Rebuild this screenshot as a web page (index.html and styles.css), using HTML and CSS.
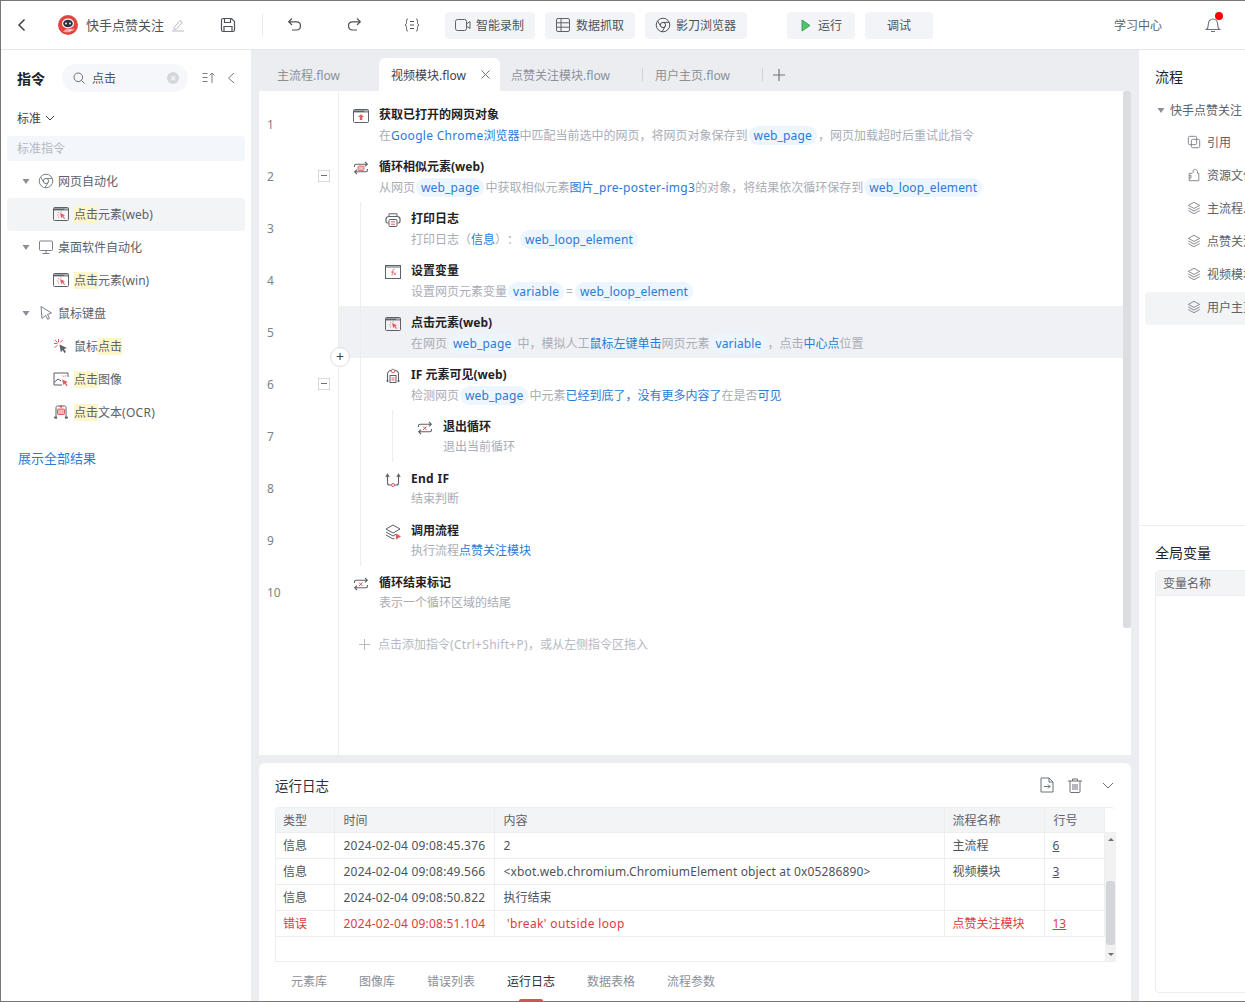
FILE: index.html
```html
<!DOCTYPE html>
<html lang="zh">
<head>
<meta charset="utf-8">
<title>快手点赞关注</title>
<link rel="stylesheet" href="styles.css">
</head>
<body>
<svg class="defs" width="0" height="0" aria-hidden="true">
  <defs>
    <symbol id="chrome" viewBox="0 0 16 16"><g fill="none" stroke="currentColor"><circle cx="8" cy="8" r="6.8"/><circle cx="8" cy="8" r="2.6"/><path d="M8 5.4h6M5.8 9.4 2.6 4M10.2 9.4 7 14.7"/></g></symbol>
    <symbol id="monitor" viewBox="0 0 16 16"><g fill="none" stroke="currentColor"><rect x="1.5" y="2" width="13" height="9.5" rx=".8"/><path d="M8 11.5V14M4.5 14.5h7"/></g></symbol>
    <symbol id="cursor" viewBox="0 0 16 16"><path d="M3 1.5 13.5 8l-4 1.4 2 4-1.8 1-2-4L4 13.5z" fill="none" stroke="currentColor" stroke-linejoin="round"/></symbol>
    <symbol id="win-click" viewBox="0 0 16 16"><rect x=".5" y="1.500" width="15" height="13" rx="1" fill="none" stroke="#5d6168"/><path d="M.5 3.400h15" stroke="#5d6168" stroke-width="2"/><path d="M11.500 3.200h1M13.500 3.200h1" stroke="#fff"/><path d="m7 7 5 2.200-1.800.7 1.800 2.300-.9.8-1.800-2.400-1 1.600z" fill="#e4595c"/><path d="M5 6 6.200 7.300M4 9H5.500M5 11.500 6.200 10.400M8 5.200V6.400" stroke="#e98b8d"/></symbol>
    <symbol id="mouse-click" viewBox="0 0 16 16"><path d="M6.500 6.500 14 10l-3 1 2 3-1.500 1-2-3-1.700 2.500z" fill="#5d6168"/><path d="M5.500 1v3.500M1 5.500h3.500M2 2l2.500 2.500M9.500 2 7.500 4.500M1.500 9.500l3-2" stroke="#e4595c"/></symbol>
    <symbol id="img-click" viewBox="0 0 16 16"><path d="M15 6V2H1v12h8" fill="none" stroke="#5d6168"/><path d="m1 11.500 4-3.500 3 2" fill="none" stroke="#5d6168"/><path d="m9 8.500 6 2.500-2.200.8 1.700 2.700-1 .7-1.800-2.700-1.200 1.800z" fill="#e4595c"/><path d="M9.500 4.500 10.500 6M13 4l-.8 1.800" stroke="#e98b8d"/></symbol>
    <symbol id="ocr" viewBox="0 0 16 16"><path d="M3 12V3.500C3 2.500 3.800 2 4.500 2h7c.8 0 1.500.5 1.500 1.500V12" fill="none" stroke="#5d6168"/><rect x="4.500" y="5" width="7" height="5.500" rx="1" fill="#f3b7b8" stroke="#e4595c"/><path d="M1 13.500h3M12 13.500h3" stroke="#5d6168" stroke-width="1.500"/><circle cx="3" cy="13.500" r="1.200" fill="#5d6168"/><circle cx="13" cy="13.500" r="1.200" fill="#5d6168"/><circle cx="8" cy="2.500" r="1.300" fill="#e4595c"/></symbol>
    <symbol id="win-up" viewBox="0 0 16 16"><rect x=".5" y="1.500" width="15" height="13" rx="1" fill="none" stroke="#5d6168"/><path d="M.5 3.400h15" stroke="#5d6168" stroke-width="2"/><path d="M11.500 3.200h1M13.500 3.200h1" stroke="#fff"/><path d="M8 6.200 11 9H9.200v3H6.800V9H5z" fill="#e4595c"/></symbol>
    <symbol id="loop" viewBox="0 0 16 16"><path d="M1.500 7V6c0-1 .7-1.800 1.700-1.800H14M12 2l2.300 2.200L12 6.400M14.500 9v1c0 1-.7 1.800-1.700 1.800H2M4 9.600l-2.300 2.200L4 14" fill="none" stroke="#5d6168" stroke-width="1.100"/><rect x="5" y="6" width="6" height="4.500" rx=".8" fill="#f4b9ba" stroke="#e4595c" stroke-width=".8"/></symbol>
    <symbol id="loop-x" viewBox="0 0 16 16"><path d="M1.500 7V6c0-1 .7-1.800 1.700-1.800H14M12 2l2.300 2.200L12 6.400M14.500 9v1c0 1-.7 1.800-1.700 1.800H2M4 9.600l-2.300 2.200L4 14" fill="none" stroke="#5d6168" stroke-width="1.100"/><path d="m6 6.500 3.500 3.500M9.500 6.500 6 10" stroke="#e4595c"/></symbol>
    <symbol id="print" viewBox="0 0 16 16"><path d="M3.500 11H2.500C1.700 11 1 10.300 1 9.500V7C1 5.500 2.500 4.500 4 4.500h8c1.500 0 3 1 3 2.500v2.500c0 .8-.7 1.500-1.500 1.500h-1" fill="none" stroke="#5d6168" stroke-width="1.200"/><path d="M4 4V1.800h8V4" fill="none" stroke="#5d6168"/><rect x="4" y="7.500" width="8" height="7" rx="1" fill="#fff" stroke="#5d6168"/><path d="M6 9.800h4M6 12.200h4" stroke="#e4595c"/></symbol>
    <symbol id="fx" viewBox="0 0 16 16"><rect x=".5" y="1.500" width="15" height="13" fill="none" stroke="#5d6168"/><path d="M.5 3h15" stroke="#5d6168"/><path d="M9.500 5.500C8 5 7.800 6 7.600 7.500L7 11.500M6 8h3M8.800 8.500l2 2.500M10.800 8.500l-2 2.500" fill="none" stroke="#e4595c" stroke-width=".8"/></symbol>
    <symbol id="if" viewBox="0 0 16 16"><path d="M2.500 14V6.500C2.500 4 4 2.500 6 2.500h4c2 0 3.500 1.500 3.500 4V14" fill="none" stroke="#5d6168" stroke-width="1.100"/><rect x="5" y="7.500" width="6" height="7" fill="#fff" stroke="#5d6168"/><circle cx="8" cy="3" r="1.800" fill="#fff" stroke="#e4595c"/><path d="M6.500 10h3M6.500 12h3" stroke="#e4595c"/><path d="M1 12.500 2.500 14.500 4 12.500M12 12.500l1.500 2 1.500-2" fill="#5d6168"/></symbol>
    <symbol id="endif" viewBox="0 0 16 16"><path d="M2.500 4v7c0 1.500.8 2 2 2h2M13.500 4v7c0 1.500-.8 2-2 2h-2M.8 5l1.700-2.800L4.200 5M11.800 5l1.700-2.800L15.200 5" fill="none" stroke="#5d6168" stroke-width="1.100"/><circle cx="8" cy="13" r="1.500" fill="#fff" stroke="#e4595c"/></symbol>
    <symbol id="call" viewBox="0 0 16 16"><path d="M8 1 15 5 8 9 1 5z M1 8l7 4 3-1.700M1 11l7 4 1.500-.8" fill="none" stroke="#5d6168"/><path d="m11 9.500 5 3-5 3z" fill="#e4595c"/></symbol>
    <symbol id="layers" viewBox="0 0 16 16"><path d="M8 1.500 14.500 5 8 8.500 1.500 5zM1.500 8 8 11.500 14.500 8M1.500 11 8 14.500 14.500 11" fill="none" stroke="currentColor"/></symbol>
    <symbol id="ref" viewBox="0 0 16 16"><g fill="none" stroke="currentColor"><rect x="1.500" y="1.500" width="9.500" height="9.500" rx="1.500"/><rect x="5" y="5" width="9.500" height="9.500" rx="1.500"/></g></symbol>
    <symbol id="puzzle" viewBox="0 0 16 16"><path d="M2.500 14.500V6H6l1-1V3.500C7 2.500 8 1.500 9 1.500s3 1.500 3 2.500V6h1.500v8.500zM2.500 8.500h2v3h-2" fill="none" stroke="currentColor"/></symbol>
    <symbol id="caret" viewBox="0 0 8 8"><path d="M.5 2h7L4 7z" fill="currentColor"/></symbol>
  </defs>
</svg>
<div class="app">
  <header class="topbar">
    <svg class="ic back" width="10" height="14" viewBox="0 0 10 14"><path d="M7.500 1.500 2 7l5.500 5.500" fill="none" stroke="#3e434b" stroke-width="1.500"/></svg>
    <svg class="logo" width="20" height="20" viewBox="0 0 20 20"><circle cx="10" cy="10" r="10" fill="#e2453f"/><path d="M5 16.500c2 1 6 1.500 10-1l2-2-3 .5H8z" fill="#f4a8a5"/><ellipse cx="10" cy="8.500" rx="6" ry="5" fill="#fff"/><ellipse cx="10" cy="8.500" rx="4.800" ry="3.800" fill="#2c3242"/><circle cx="8" cy="8.500" r=".9" fill="#fff"/><circle cx="12" cy="8.500" r=".9" fill="#fff"/><path d="M11 16c1-.3 1.800-1 2-2" stroke="#fff" fill="none"/></svg>
    <span class="doc-name">快手点赞关注</span>
    <svg class="ic pencil" width="14" height="14" viewBox="0 0 14 14"><path d="M3 9.500 9 2.500l2.200 1.800-6 7H3zM1 13h12" fill="none" stroke="#b6bac2"/></svg>
    <svg class="ic save" width="16" height="16" viewBox="0 0 16 16"><path d="M1.500 3c0-.8.600-1.500 1.500-1.500h8.500l3 3V13c0 .8-.6 1.500-1.500 1.500H3c-.9 0-1.500-.7-1.500-1.500zM4.500 1.500v4h6v-4M4 14.500V9.500h8v5" fill="none" stroke="#4e535b" stroke-width="1.200"/></svg>
    <i class="vsep"></i>
    <svg class="ic undo" width="16" height="16" viewBox="0 0 16 16"><path d="M5 1.500 1.700 4.800 5 8M2 4.800h7.500c2.500 0 4 1.800 4 4s-1.500 4.200-4 4.200H5" fill="none" stroke="#4e535b" stroke-width="1.200"/></svg>
    <svg class="ic redo" width="16" height="16" viewBox="0 0 16 16"><path d="M11 1.500l3.300 3.300L11 8M14 4.800H6.500c-2.500 0-4 1.800-4 4s1.500 4.200 4 4.200H11" fill="none" stroke="#4e535b" stroke-width="1.200"/></svg>
    <svg class="ic vars" width="16" height="14" viewBox="0 0 16 14"><path d="M4 1C2.500 1 2.500 2 2.500 3.500S2.500 6.500 1 7c1.500.5 1.500 2 1.500 3.500S2.500 13 4 13M12 1c1.500 0 1.500 1 1.500 2.500s0 3 1.500 3.500c-1.500.5-1.500 2-1.500 3.500S13.500 13 12 13M6 3.500h4M6 7h4M6 10.500h4" fill="none" stroke="#4e535b"/></svg>
    <div class="tool-btn rec"><svg width="16" height="14" viewBox="0 0 16 14"><rect x=".5" y="1.500" width="11" height="11" rx="2" fill="none" stroke="#5d6168"/><path d="m12 5.500 3-2v7l-3-2" fill="none" stroke="#5d6168"/></svg>智能录制</div>
    <div class="tool-btn grab"><svg width="14" height="14" viewBox="0 0 14 14"><rect x=".5" y=".5" width="13" height="13" rx="1.500" fill="none" stroke="#5d6168"/><path d="M.5 4.800h13M.5 9.200h13M5 .5v13" stroke="#5d6168" fill="none"/></svg>数据抓取</div>
    <div class="tool-btn browser"><svg class="gray" width="16" height="16"><use href="#chrome"/></svg>影刀浏览器</div>
    <div class="tool-btn run"><svg width="10" height="13" viewBox="0 0 10 13"><path d="M1 1l8 5.500L1 12z" fill="#52c26b" stroke="#3aa655"/></svg>运行</div>
    <div class="tool-btn debug">调试</div>
    <span class="learn">学习中心</span>
    <span class="bell"><svg width="16" height="16" viewBox="0 0 16 16"><path d="M1.500 12.500h13c-1.500-1-1.800-2.500-1.800-5C12.700 4.500 11 2 8 2S3.300 4.500 3.300 7.500c0 2.500-.3 4-1.800 5zM6 14.500h4" fill="none" stroke="#6b7079" stroke-width="1.100"/></svg><i class="dot"></i></span>
  </header>
  <div class="main">
    <aside class="side">
      <div class="side-head">
        <b class="side-title">指令</b>
        <div class="search">
          <svg width="12" height="12" viewBox="0 0 12 12"><circle cx="5.300" cy="5.300" r="4.300" fill="none" stroke="#6b7079"/><path d="m8.500 8.500 3 3" stroke="#6b7079"/></svg>
          <span class="q">点击</span>
          <i class="clear">×</i>
        </div>
        <svg class="sort" width="14" height="12" viewBox="0 0 14 12"><path d="M.5 1.500h5M.5 5.500h5M.5 9.500h5M10 11V1M7.500 3.500 10 1l2.500 2.500" fill="none" stroke="#777c85"/></svg>
        <svg class="collapse" width="8" height="12" viewBox="0 0 8 12"><path d="M7 1 1.500 6 7 11" fill="none" stroke="#777c85"/></svg>
      </div>
      <div class="std">标准<svg width="10" height="6" viewBox="0 0 10 6"><path d="m1 1 4 4 4-4" fill="none" stroke="#3e434b"/></svg></div>
      <div class="std-bar">标准指令</div>
      <ul class="tree">
        <li class="group"><svg class="car"><use href="#caret"/></svg><svg class="g-ic"><use href="#chrome"/></svg>网页自动化</li>
        <li class="leaf sel"><svg class="l-ic"><use href="#win-click"/></svg><span><mark>点击</mark>元素(web)</span></li>
        <li class="group"><svg class="car"><use href="#caret"/></svg><svg class="g-ic"><use href="#monitor"/></svg>桌面软件自动化</li>
        <li class="leaf"><svg class="l-ic"><use href="#win-click"/></svg><span><mark>点击</mark>元素(win)</span></li>
        <li class="group"><svg class="car"><use href="#caret"/></svg><svg class="g-ic"><use href="#cursor"/></svg>鼠标键盘</li>
        <li class="leaf"><svg class="l-ic"><use href="#mouse-click"/></svg><span>鼠标<mark>点击</mark></span></li>
        <li class="leaf"><svg class="l-ic"><use href="#img-click"/></svg><span><mark>点击</mark>图像</span></li>
        <li class="leaf"><svg class="l-ic"><use href="#ocr"/></svg><span><mark>点击</mark>文本<span class="lat">(OCR)</span></span></li>
      </ul>
      <a class="show-all">展示全部结果</a>
    </aside>

    <section class="center">
      <nav class="tabs">
        <div class="tab t1">主流程.flow</div>
        <div class="tab t2 on">视频模块.flow<svg width="9" height="9" viewBox="0 0 9 9"><path d="m.5.500 8 8M8.500.500l-8 8" stroke="#70757e"/></svg></div>
        <div class="tab t3">点赞关注模块.flow<i class="tsep"></i></div>
        <div class="tab t4">用户主页.flow<i class="tsep"></i></div>
        <svg class="plus" width="12" height="12" viewBox="0 0 12 12"><path d="M6 0v12M0 6h12" stroke="#70757e" stroke-width="1.200"/></svg>
      </nav>
      <div class="editor">
        <div class="gutter">
          <div class="ln">1</div>
          <div class="ln">2<i class="fold"></i></div>
          <div class="ln">3</div>
          <div class="ln">4</div>
          <div class="ln">5</div>
          <div class="ln">6<i class="fold"></i></div>
          <div class="ln">7</div>
          <div class="ln">8</div>
          <div class="ln">9</div>
          <div class="ln">10</div>
        </div>
        <div class="code">
          <div class="step"><svg class="s-ic"><use href="#win-up"/></svg><div><h4>获取已打开的网页对象</h4><p>在<a class="lat">Google Chrome</a><a>浏览器</a>中匹配当前选中的网页，将网页对象保存到<span class="pill">web_page</span>，网页加载超时后重试此指令</p></div></div>
          <div class="step"><svg class="s-ic"><use href="#loop"/></svg><div><h4>循环相似元素(web)</h4><p>从网页<span class="pill">web_page</span>中获取相似元素<a>图片</a><a class="lat">_pre-poster-img3</a>的对象，将结果依次循环保存到<span class="pill">web_loop_element</span></p></div></div>
          <div class="block">
            <div class="step"><svg class="s-ic"><use href="#print"/></svg><div><h4>打印日志</h4><p>打印日志（<a>信息</a>）：<span class="pill">web_loop_element</span></p></div></div>
            <div class="step"><svg class="s-ic"><use href="#fx"/></svg><div><h4>设置变量</h4><p>设置网页元素变量<span class="pill">variable</span><span class="eq">=</span><span class="pill">web_loop_element</span></p></div></div>
            <div class="step active"><svg class="s-ic"><use href="#win-click"/></svg><div><h4>点击元素(web)</h4><p>在网页<span class="pill">web_page</span>中，模拟人工<a>鼠标左键单击</a>网页元素<span class="pill">variable</span>，点击<a>中心点</a>位置</p></div><button class="add">+</button></div>
            <div class="step"><svg class="s-ic"><use href="#if"/></svg><div><h4>IF 元素可见(web)</h4><p>检测网页<span class="pill">web_page</span>中元素<a>已经到底了，没有更多内容了</a>在是否<a>可见</a></p></div></div>
            <div class="block">
              <div class="step"><svg class="s-ic"><use href="#loop-x"/></svg><div><h4>退出循环</h4><p class="plain">退出当前循环</p></div></div>
            </div>
            <div class="step"><svg class="s-ic"><use href="#endif"/></svg><div><h4 class="lat">End IF</h4><p class="plain">结束判断</p></div></div>
            <div class="step"><svg class="s-ic"><use href="#call"/></svg><div><h4>调用流程</h4><p class="plain">执行流程<a>点赞关注模块</a></p></div></div>
          </div>
          <div class="step"><svg class="s-ic"><use href="#loop-x"/></svg><div><h4>循环结束标记</h4><p class="plain">表示一个循环区域的结尾</p></div></div>
          <div class="hint"><svg width="11" height="11" viewBox="0 0 11 11"><path d="M5.500 0v11M0 5.500h11" stroke="#b5b9c2"/></svg><span>点击添加指令<span class="lat">(Ctrl+Shift+P)</span>，或从左侧指令区拖入</span></div>
        </div>
        <div class="vbar"><i></i></div>
      </div>
      <div class="log">
        <div class="log-head">
          <span class="log-title">运行日志</span>
          <svg class="li1" width="14" height="16" viewBox="0 0 14 16"><path d="M1 1h8l4 4v10H1zM9 1v4h4M4 9.500h6M8 7.500l2 2-2 2" fill="none" stroke="#6b7079"/></svg>
          <svg class="li2" width="14" height="15" viewBox="0 0 14 15"><path d="M0 3h14M4.500 3V1h5v2M2 3v10.500c0 .5.300 1 1 1h8c.7 0 1-.5 1-1V3M5 6v6M7 6v6M9 6v6" fill="none" stroke="#6b7079"/></svg>
          <svg class="li3" width="12" height="7" viewBox="0 0 12 7"><path d="m1 1 5 5 5-5" fill="none" stroke="#6b7079"/></svg>
        </div>
        <div class="grid-wrap">
          <table class="grid">
            <colgroup><col class="c1"><col class="c2"><col class="c3"><col class="c4"><col class="c5"></colgroup>
            <thead><tr><th>类型</th><th>时间</th><th>内容</th><th>流程名称</th><th>行号</th></tr></thead>
            <tbody>
              <tr><td>信息</td><td>2024-02-04 09:08:45.376</td><td>2</td><td>主流程</td><td><u>6</u></td></tr>
              <tr><td>信息</td><td>2024-02-04 09:08:49.566</td><td class="obj">&lt;xbot.web.chromium.ChromiumElement object at 0x05286890&gt;</td><td>视频模块</td><td><u>3</u></td></tr>
              <tr><td>信息</td><td>2024-02-04 09:08:50.822</td><td>执行结束</td><td></td><td></td></tr>
              <tr class="err"><td>错误</td><td>2024-02-04 09:08:51.104</td><td class="brk">&nbsp;'break' outside loop</td><td>点赞关注模块</td><td><u>13</u></td></tr>
            </tbody>
          </table>
          <div class="grid-bar"><i class="up"></i><i class="thumb"></i><i class="down"></i></div>
        </div>
        <div class="log-tabs">
          <span>元素库</span><span>图像库</span><span>错误列表</span><span class="on">运行日志</span><span>数据表格</span><span>流程参数</span>
        </div>
      </div>
    </section>

    <aside class="right">
      <div class="flows">
        <h3>流程</h3>
        <div class="r-root"><svg class="car"><use href="#caret"/></svg>快手点赞关注</div>
        <div class="r-item"><svg><use href="#ref"/></svg>引用</div>
        <div class="r-item"><svg><use href="#puzzle"/></svg>资源文件</div>
        <div class="r-item"><svg><use href="#layers"/></svg>主流程.flow</div>
        <div class="r-item"><svg><use href="#layers"/></svg>点赞关注模块.flow</div>
        <div class="r-item"><svg><use href="#layers"/></svg>视频模块.flow</div>
        <div class="r-item sel"><svg><use href="#layers"/></svg>用户主页.flow</div>
      </div>
      <div class="globals">
        <h3>全局变量</h3>
        <div class="var-table"><div class="var-head">变量名称</div></div>
      </div>
    </aside>
  </div>
</div>
</body>
</html>
```
FILE: styles.css
```css
* { box-sizing: border-box; }
html, body { margin: 0; padding: 0; }
body {
  width: 1245px;
  height: 1002px;
  overflow: hidden;
  font-family: "Noto Sans", "Noto Sans CJK SC", sans-serif;
  font-size: 12px;
  color: #4e535b;
  background: #fff;
  text-spacing-trim: space-all;
}
.defs { position: absolute; }
svg { display: block; flex: none; }
i { font-style: normal; }
.lat { letter-spacing: .3px; }

.app {
  height: 1002px;
  border: 1px solid #777;
  border-right: 0;
  display: flex;
  flex-direction: column;
}

/* top bar */
.topbar {
  height: 49px;
  flex: none;
  border-bottom: 1px solid #e4e6ea;
  display: flex;
  align-items: center;
  padding-left: 16px;
}
.back { margin-right: 31px; }
.logo { margin-right: 8px; }
.doc-name { font-size: 13px; width: 78px; white-space: nowrap; margin-right: 7px; padding-bottom: 2px; }
.pencil { margin-right: 35px; }
.save { margin-right: 26px; }
.vsep { width: 1px; height: 22px; background: #e8eaed; margin-right: 24px; }
.undo { margin-right: 43px; }
.redo { margin-right: 42px; }
.vars { margin-right: 25px; }
.tool-btn {
  height: 27px;
  background: #f3f4f7;
  border-radius: 4px;
  display: flex;
  align-items: center;
  gap: 5px;
  padding-left: 10px;
  margin-right: 10px;
  white-space: nowrap;
}
.rec { width: 90px; }
.grab { width: 90px; gap: 6px; padding-left: 11px; }
.browser { width: 102px; margin-right: 40px; }
.run { width: 68px; padding-left: 14px; gap: 7px; }
.debug { width: 68px; justify-content: center; padding-left: 0; }
.learn { margin-left: 171px; width: 48px; white-space: nowrap; color: #5d6168; }
.bell { position: relative; margin-left: 43px; }
.dot { position: absolute; left: 10px; top: -5px; width: 8px; height: 8px; border-radius: 50%; background: #f00; }

.main { flex: 1; min-height: 0; display: flex; }

/* left command panel */
.side { width: 250px; flex: none; background: #fff; }
.side-head { display: flex; align-items: center; padding: 14px 0 0 16px; height: 42px; }
.side-title { font-size: 14px; color: #1f2329; width: 45px; font-weight: 700; }
.search {
  width: 126px;
  height: 28px;
  border-radius: 14px;
  background: #f6f7fa;
  display: flex;
  align-items: center;
  padding-left: 11px;
  position: relative;
}
.q { margin-left: 7px; color: #4e535b; padding-bottom: 1px; }
.clear {
  position: absolute; right: 9px; top: 8px;
  width: 12px; height: 12px; border-radius: 50%;
  background: #d5d7dc; color: #fff;
  font-size: 10px; line-height: 12px; text-align: center;
}
.sort { margin-left: 14px; }
.collapse { margin-left: 11px; }
.std { margin: 16px 0 0 16px; height: 20px; display: flex; align-items: center; gap: 4px; color: #3e434b; }
.std-bar {
  margin: 8px 6px 4px;
  height: 25px;
  background: #f3f6fa;
  border-radius: 4px;
  padding-left: 10px;
  line-height: 25px;
  color: #b5b9c2;
}
.tree { list-style: none; margin: 0; padding: 0; }
.tree li { height: 33px; padding-bottom: 2px; display: flex; align-items: center; white-space: nowrap; }
.group { padding-left: 21px; color: #5d6168; }
.car { width: 8px; height: 8px; color: #8b9099; margin-right: 8px; }
.g-ic { width: 16px; height: 16px; margin-right: 4px; color: #7b8088; }
.leaf { margin: 0 6px; padding-left: 46px; border-radius: 4px; color: #5d6168; }
.leaf.sel { background: #f3f4f6; }
.l-ic { width: 16px; height: 16px; margin-right: 5px; }
mark { background: #fdf6c9; color: inherit; }
.show-all { display: block; margin: 19px 0 0 17px; font-size: 13px; line-height: 20px; color: #2a7bd8; }

/* centre */
.center {
  flex: none;
  width: 888px;
  background: #ebedf1;
  padding: 0 8px;
  display: flex;
  flex-direction: column;
}
.tabs { height: 41px; flex: none; padding-top: 8px; display: flex; align-items: center; }
.tab { height: 33px; display: flex; align-items: center; white-space: nowrap; color: #8b9099; }
.t1 { width: 120px; padding-left: 18px; }
.t2 { width: 121px; padding-left: 12px; background: #fff; border-radius: 6px 6px 0 0; color: #3e434b; }
.t2 svg { margin-left: 15px; }
.t3 { width: 143px; padding-left: 11px; }
.t4 { width: 120px; padding-left: 12px; }
.tsep { width: 1px; height: 13px; background: #cfd2d8; margin-left: auto; }
.plus { margin-left: 10px; }

.editor {
  height: 664px;
  flex: none;
  background: #fff;
  display: flex;
  position: relative;
}
.gutter { width: 80px; flex: none; border-right: 1px solid #eceef1; padding-top: 7px; }
.ln {
  height: 52px;
  padding: 0 8px;
  display: flex;
  align-items: center;
  justify-content: space-between;
  color: #7d828a;
}
.fold {
  width: 12px; height: 12px;
  border: 1px solid #d8dade;
  position: relative;
}
.fold::after { content: ""; position: absolute; left: 2px; right: 2px; top: 4px; height: 1px; background: #6b7079; }
.code { flex: 1; min-width: 0; padding-top: 7px; }
.step { height: 52px; display: flex; gap: 10px; padding: 8px 0 0 14px; position: relative; }
.s-ic { width: 16px; height: 16px; margin-top: 2px; }
.step h4 { margin: 0; font-size: 12px; line-height: 18px; font-weight: 700; color: #1f2329; white-space: nowrap; }
.step p { margin: 2px 0 0; line-height: 20px; color: #a9adb6; white-space: nowrap; }
.step p.plain { margin-top: 1px; }
.step a { color: #2a7bd8; }
.eq { margin: 0 1px; }
.pill {
  display: inline-block;
  height: 19px;
  line-height: 19px;
  padding: 0 5px;
  margin: 0 1px;
  border-radius: 10px;
  background: #edf5fe;
  color: #2a7bd8;
  letter-spacing: .15px;
}
.block { margin-left: 21px; border-left: 1px solid #eceef1; }
.block > .step { padding-left: 24px; }
.block .block { margin-left: 31px; }
.step.active {
  margin-left: -22px;
  padding-left: 46px;
  background: rgba(235, 237, 241, .8);
}
.add {
  position: absolute; left: -9px; bottom: -9px;
  width: 20px; height: 20px; padding: 0;
  border: 1px solid #dcdee2; border-radius: 50%;
  background: #fff; color: #3e434b;
  font: 14px/16px "Noto Sans", sans-serif;
}
.hint {
  margin: 16px 0 0 20px;
  height: 20px;
  display: flex;
  align-items: center;
  gap: 8px;
  color: #b5b9c2;
  white-space: nowrap;
}
.vbar { width: 8px; flex: none; }
.vbar i { display: block; height: 537px; background: #dcdde1; border-radius: 2px; }

/* log */
.log {
  margin-top: 8px;
  flex: 1;
  min-height: 0;
  background: #fff;
  border-radius: 6px 6px 0 0;
  padding: 0 16px;
  display: flex;
  flex-direction: column;
}
.log-head { height: 44px; flex: none; display: flex; align-items: center; }
.log-title { font-size: 13.5px; color: #2c3038; flex: 1; }
.li1 { margin-right: 14px; }
.li2 { margin-right: 20px; }
.li3 { margin-right: 1px; }
.grid-wrap {
  height: 155px;
  flex: none;
  display: flex;
  border: 1px solid #eceef1;
  border-right: 0;
  border-radius: 4px 4px 0 0;
  position: relative;
}
.grid { width: 828px; table-layout: fixed; border-collapse: collapse; align-self: flex-start; }
.c1 { width: 58px; } .c2 { width: 160px; } .c3 { width: 450px; } .c4 { width: 100px; } .c5 { width: 60px; }
.grid th, .grid td {
  padding: 0 8px;
  border-right: 1px solid #eceef1;
  border-bottom: 1px solid #eceef1;
  text-align: left;
  font-weight: 400;
  white-space: nowrap;
  overflow: hidden;
}
.grid th:first-child, .grid td:first-child { padding-left: 7px; }
.grid th:nth-child(2), .grid td:nth-child(2), .grid th:nth-child(3), .grid td:nth-child(3), .grid th:nth-child(5) { padding-left: 9px; }
.grid th { height: 24px; background: #f3f4f6; color: #5d6168; }
.grid td { height: 26px; color: #4e535b; }
.grid td:nth-child(2) { letter-spacing: .2px; }
.grid td.obj { letter-spacing: .14px; }
.grid td.brk { letter-spacing: .35px; }
.grid .err td { color: #e4393c; }
.grid-bar { width: 11px; flex: none; margin-top: 24px; background: #f1f1f1; display: flex; flex-direction: column; align-items: center; position: relative; }
.grid-bar .thumb { display: block; width: 9px; height: 64px; margin-top: 49px; background: #d3d5d9; border-radius: 3px; }
.grid-bar .up, .grid-bar .down { position: absolute; left: 3px; width: 0; height: 0; border-left: 3px solid transparent; border-right: 3px solid transparent; }
.grid-bar .up { top: 6px; border-bottom: 3px solid #6b7079; }
.grid-bar .down { bottom: 5px; border-top: 3px solid #6b7079; }
.log-tabs { flex: 1; display: flex; align-items: center; gap: 32px; padding: 0 0 0 16px; color: #8b9099; }
.log-tabs span { position: relative; white-space: nowrap; line-height: 39px; }
.log-tabs .on { color: #2c3038; }
.log-tabs .on::after {
  content: ""; position: absolute; left: 12px; bottom: 0;
  width: 24px; height: 2px; background: #d9534f; border-radius: 3px 3px 0 0;
}

/* right */
.right { flex: 1; min-width: 0; background: #fff; display: flex; flex-direction: column; overflow: hidden; }
.right h3 { margin: 0; font-size: 14px; line-height: 20px; font-weight: 400; color: #1f2329; padding-left: 16px; }
.flows { flex: 1; padding-top: 17px; border-bottom: 1px solid #eceef1; }
.r-root { margin-top: 7px; height: 33px; padding-bottom: 2px; display: flex; align-items: center; padding-left: 18px; white-space: nowrap; color: #5d6168; }
.r-root .car { margin-right: 5px; }
.r-item { height: 33px; padding-bottom: 3px; display: flex; align-items: center; gap: 6px; padding-left: 42px; margin-left: 6px; white-space: nowrap; color: #5d6168; border-radius: 4px 0 0 4px; }
.r-item svg { width: 14px; height: 14px; color: #777c85; }
.r-item.sel { background: #f3f4f6; }
.globals { height: 475px; flex: none; padding: 17px 0 8px; display: flex; flex-direction: column; }
.var-table { margin: 7px -8px 0 16px; flex: 1; border: 1px solid #eceef1; border-radius: 4px; }
.var-head { height: 25px; line-height: 25px; background: #f3f4f6; border-bottom: 1px solid #eceef1; padding-left: 7px; color: #5d6168; }
```
